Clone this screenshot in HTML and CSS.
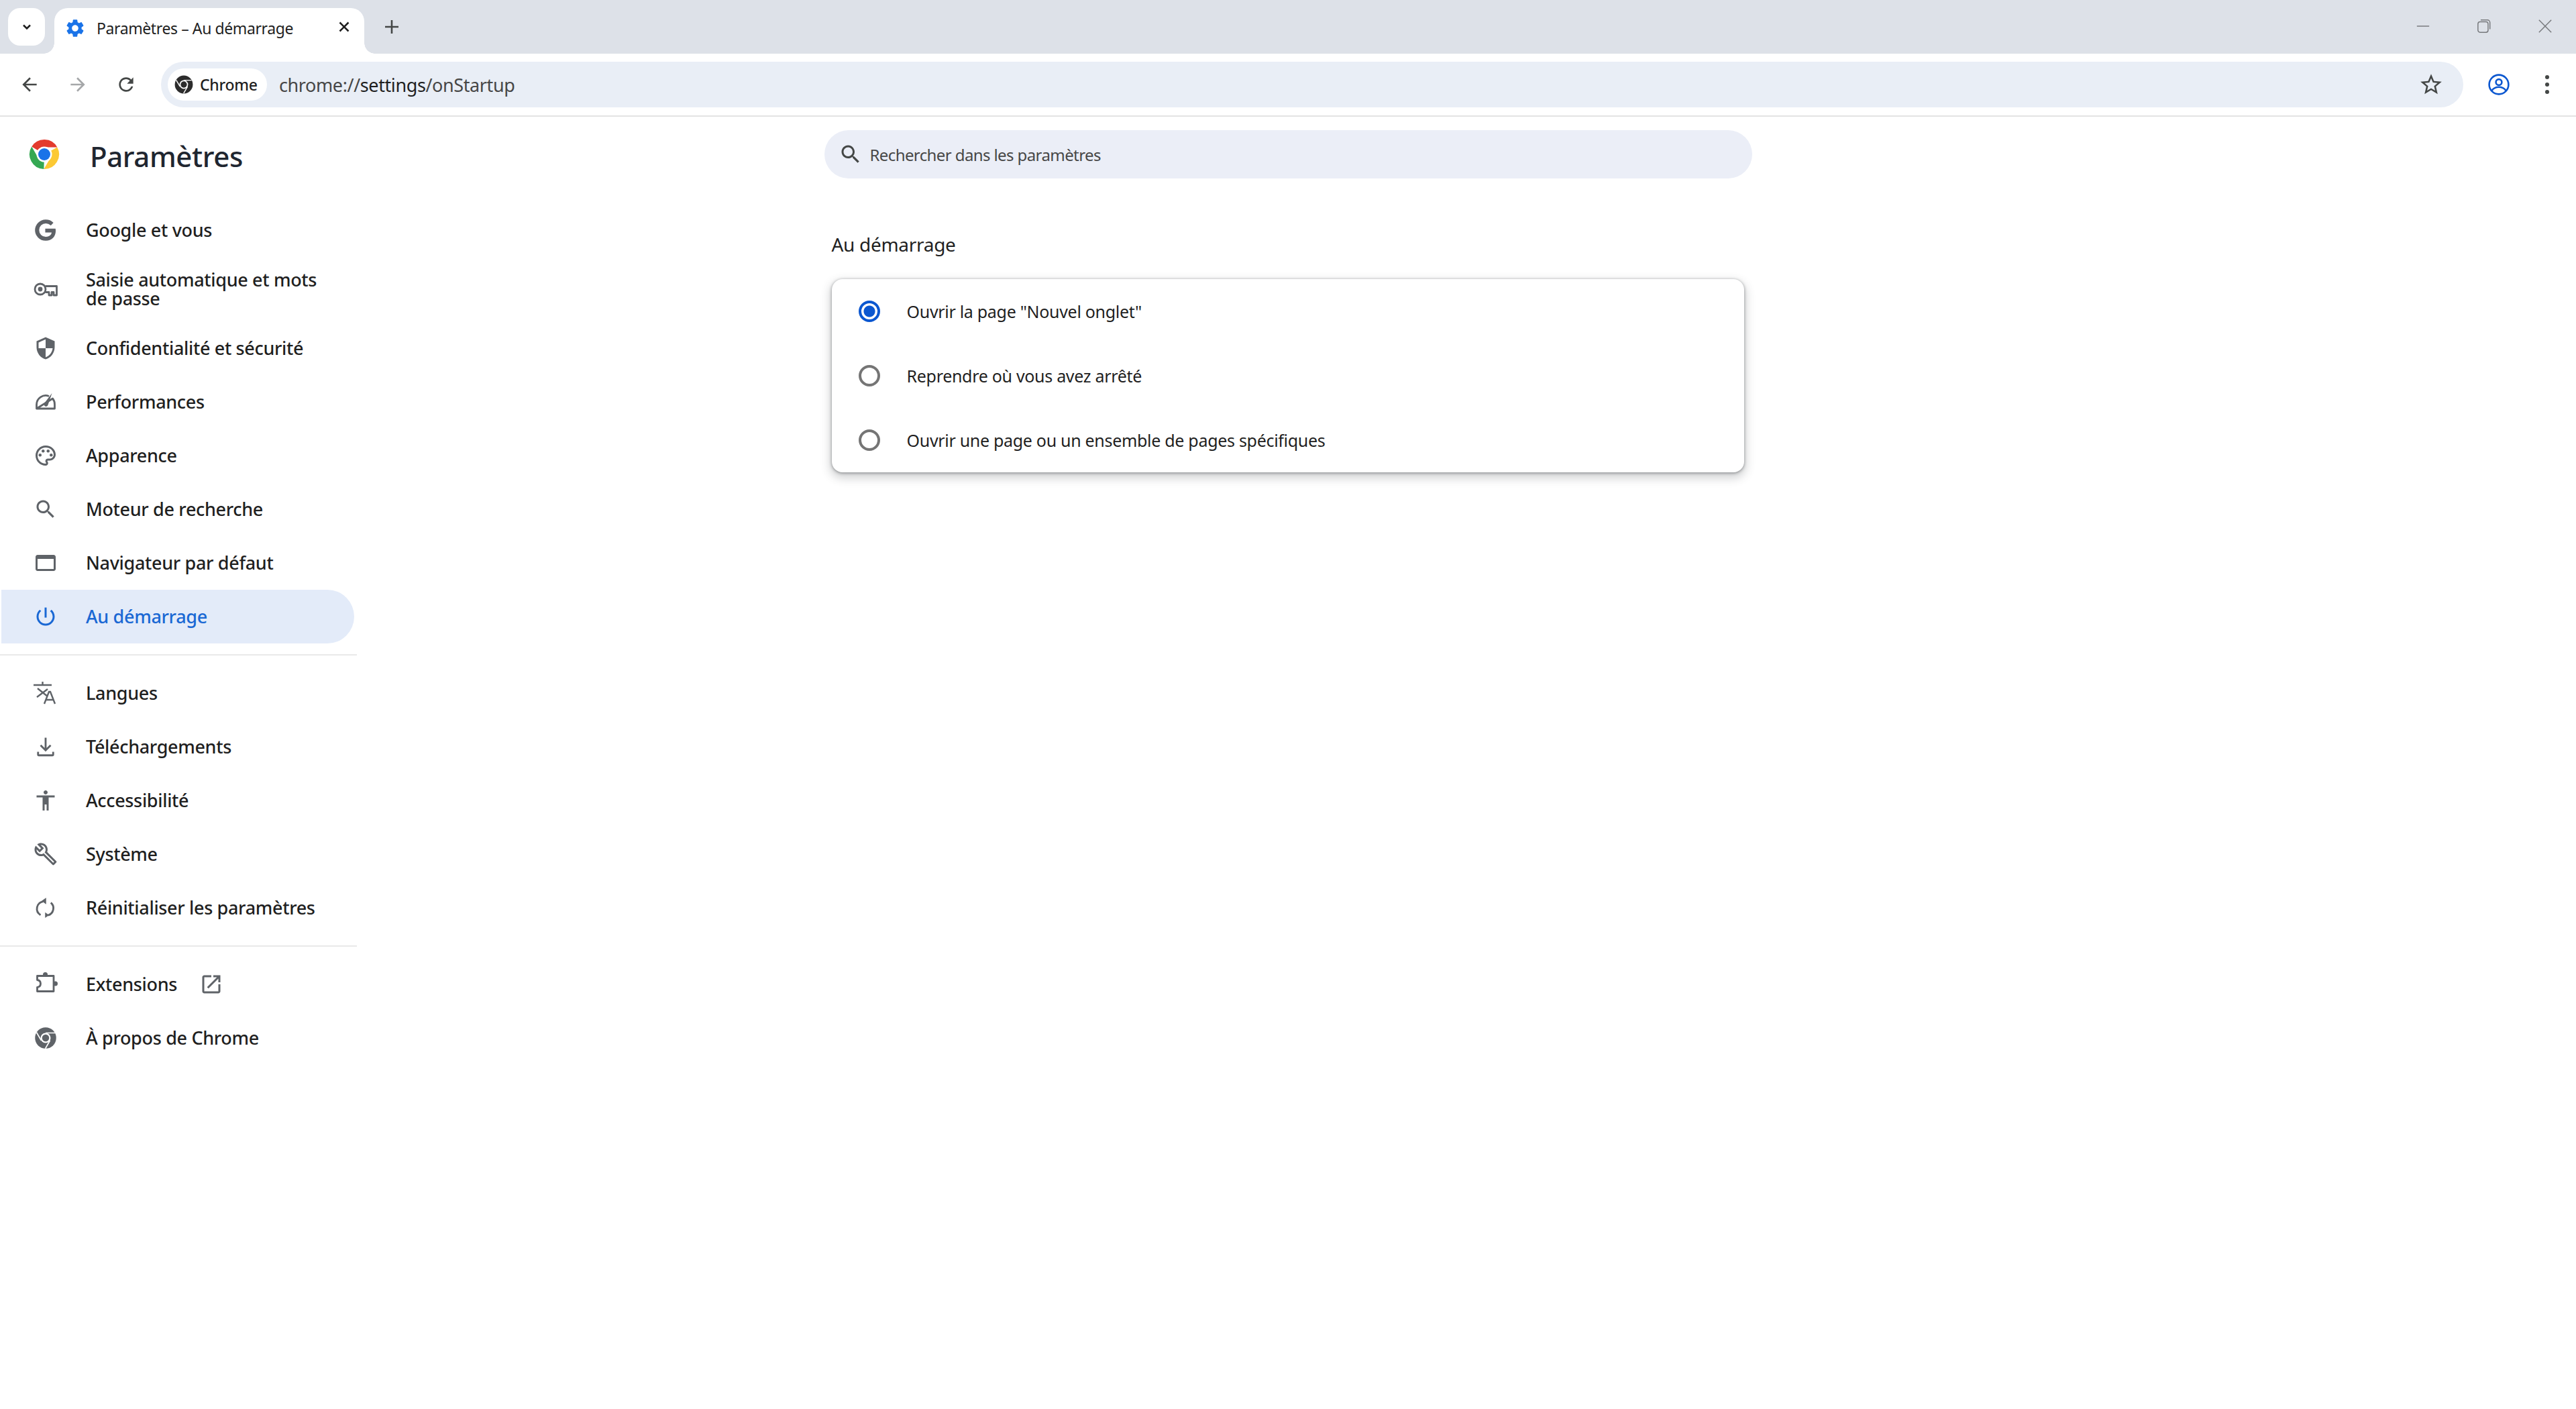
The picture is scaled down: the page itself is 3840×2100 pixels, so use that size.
FILE: index.html
```html
<!DOCTYPE html>
<html lang="fr">
<head>
<meta charset="utf-8">
<title>Paramètres – Au démarrage</title>
<link rel="stylesheet" href="styles.css">
</head>
<body>
<svg class="defs" width="0" height="0">
  <defs>
    <path id="wedge" d="M0 0L0 -10.5L19.34 -10.5A22 22 0 0 0 -18.76 -11.5Z"/>
  </defs>
</svg>
<div class="app">
  <header class="tabstrip">
    <div class="tabsearch"><svg class="i20" viewBox="0 0 20 20"><path d="M5 7.5l5 5 5-5" fill="none" stroke="#1f1f1f" stroke-width="2.6"/></svg></div>
    <div class="tab">
      <svg class="tabicon" viewBox="0 0 24 24"><path fill="#1a73e8" d="M19.14 12.94c.04-.3.06-.61.06-.94 0-.32-.02-.64-.07-.94l2.03-1.58c.18-.14.23-.41.12-.61l-1.92-3.32c-.12-.22-.37-.29-.59-.22l-2.39.96c-.5-.38-1.03-.7-1.62-.94l-.36-2.54c-.04-.24-.24-.41-.48-.41h-3.84c-.24 0-.43.17-.47.41l-.36 2.54c-.59.24-1.13.57-1.62.94l-2.39-.96c-.22-.08-.47 0-.59.22L2.74 8.87c-.12.21-.08.47.12.61l2.03 1.58c-.05.3-.09.63-.09.94s.02.64.07.94l-2.03 1.58c-.18.14-.23.41-.12.61l1.92 3.32c.12.22.37.29.59.22l2.39-.96c.5.38 1.03.7 1.62.94l.36 2.54c.05.24.24.41.48.41h3.84c.24 0 .44-.17.47-.41l.36-2.54c.59-.24 1.13-.56 1.62-.94l2.39.96c.22.08.47 0 .59-.22l1.92-3.32c.12-.22.07-.47-.12-.61l-2.01-1.58zM12 15.6c-1.98 0-3.6-1.62-3.6-3.6s1.62-3.6 3.6-3.6 3.6 1.62 3.6 3.6-1.62 3.6-3.6 3.6z"/></svg>
      <span class="tabtitle">Paramètres – Au démarrage</span>
      <svg class="tabclose" viewBox="0 0 20 20"><path d="M3.5 3.5l13 13M16.5 3.5l-13 13" stroke="#1f1f1f" stroke-width="2.6" fill="none"/></svg>
    </div>
    <svg class="newtab" viewBox="0 0 24 24"><path d="M12 2v20M2 12h20" stroke="#444746" stroke-width="2.6" fill="none"/></svg>
    <div class="winctl">
      <svg class="winbtn" viewBox="0 0 24 24"><path d="M2 12h20" stroke="#77797c" stroke-width="1.6" fill="none"/></svg>
      <svg class="winbtn" viewBox="0 0 24 24"><rect x="2" y="5" width="16.5" height="17" rx="3.5" stroke="#77797c" stroke-width="1.6" fill="none"/><path d="M6.5 2h11a4 4 0 0 1 4 4v11" stroke="#77797c" stroke-width="1.6" fill="none"/></svg>
      <svg class="winbtn" viewBox="0 0 24 24"><path d="M2 2l20 20M22 2L2 22" stroke="#77797c" stroke-width="1.6" fill="none"/></svg>
    </div>
  </header>

  <nav class="toolbar">
    <svg class="tool" viewBox="0 0 24 24"><path fill="#444746" d="M20 11H7.83l5.59-5.59L12 4l-8 8 8 8 1.41-1.41L7.83 13H20v-2z"/></svg>
    <svg class="tool" viewBox="0 0 24 24"><path fill="#a5a7a9" d="M12 4l-1.41 1.41L16.17 11H4v2h12.17l-5.58 5.59L12 20l8-8z"/></svg>
    <svg class="tool" viewBox="0 0 24 24"><path fill="#444746" d="M17.65 6.35C16.2 4.9 14.21 4 12 4c-4.42 0-7.99 3.58-7.99 8s3.57 8 7.99 8c3.73 0 6.84-2.55 7.73-6h-2.08c-.82 2.33-3.04 4-5.65 4-3.31 0-6-2.69-6-6s2.69-6 6-6c1.66 0 3.14.69 4.22 1.78L13 11h7V4l-2.35 2.35z"/></svg>
    <div class="omnibox">
      <div class="chip">
        <svg class="chipicon" viewBox="-24 -24 48 48">
          <circle r="23" fill="#2c2c2c"/><circle r="11" fill="#fff"/><circle r="8" fill="#2c2c2c"/>
          <path d="M0 -11L20 -11M9.5 5.5L-0.5 22.5M-9.5 5.5L-19.5 -11.5" stroke="#fff" stroke-width="2.4" fill="none"/>
        </svg>
        <span>Chrome</span>
      </div>
      <span class="url"><span class="urlscheme">chrome://</span>settings<span class="urlscheme">/onStartup</span></span>
      <svg class="star" viewBox="0 0 24 24"><path fill="#444746" d="M22 9.24l-7.19-.62L12 2 9.19 8.63 2 9.24l5.46 4.73L5.82 21 12 17.27 18.18 21l-1.63-7.03L22 9.24zM12 15.4l-3.76 2.27 1-4.28-3.32-2.88 4.38-.38L12 6.1l1.71 4.04 4.38.38-3.32 2.88 1 4.28L12 15.4z"/></svg>
    </div>
    <svg class="profile" viewBox="0 0 32 32"><circle cx="16" cy="16" r="14.4" fill="none" stroke="#0b57d0" stroke-width="2.6"/><circle cx="16" cy="12.5" r="4.4" fill="none" stroke="#0b57d0" stroke-width="2.6"/><path d="M5.5 25c2.5-3.6 6.3-5.2 10.5-5.2s8 1.6 10.5 5.2" fill="none" stroke="#0b57d0" stroke-width="2.6"/></svg>
    <svg class="menu" viewBox="0 0 8 32"><circle cx="4" cy="5" r="3" fill="#444746"/><circle cx="4" cy="16" r="3" fill="#444746"/><circle cx="4" cy="27" r="3" fill="#444746"/></svg>
  </nav>

  <div class="page">
    <aside class="sidebar">
      <div class="brand">
        <svg class="logo" viewBox="-24 -24 48 48">
          <use href="#wedge" fill="#e33b2e"/>
          <use href="#wedge" fill="#fcc934" transform="rotate(120)"/>
          <use href="#wedge" fill="#34a853" transform="rotate(240)"/>
          <circle r="11.5" fill="#fff"/><circle r="9" fill="#1a73e8"/>
        </svg>
        <h1 class="brandtitle">Paramètres</h1>
      </div>
      <ul class="menulist">
        <li class="item"><svg class="icon" viewBox="0 0 24 24"><path fill="#5f6368" stroke="#5f6368" stroke-width="1.1" d="M21.35 11.1h-9.17v2.73h6.51c-.33 3.81-3.5 5.44-6.5 5.44C8.36 19.27 5 16.25 5 12c0-4.1 3.2-7.27 7.2-7.27 3.09 0 4.9 1.97 4.9 1.97L19 4.72S16.56 2 12.1 2C6.42 2 2 6.8 2 12c0 5.05 4.13 10 10.22 10 5.35 0 9.25-3.67 9.25-9.09 0-1.15-.12-1.81-.12-1.81z"/></svg><span>Google et vous</span></li>
        <li class="item tall"><svg class="icon" viewBox="0 0 36 36"><circle cx="10" cy="18" r="8" fill="none" stroke="#5f6368" stroke-width="2.8"/><circle cx="10" cy="18" r="3.4" fill="#5f6368"/><path d="M17.500 13.500H34.500V27H30V22.500H27V27H23V22.500H17.500" fill="none" stroke="#5f6368" stroke-width="2.8" stroke-linejoin="round"/></svg><span>Saisie automatique et mots de passe</span></li>
        <li class="item"><svg class="icon" viewBox="0 0 24 24"><path fill="#5f6368" d="M12 1L3 5v6c0 5.55 3.84 10.74 9 12 5.16-1.26 9-6.45 9-12V5l-9-4zm0 10.99h7c-.53 4.12-3.28 7.79-7 8.94V12H5V6.3l7-3.11v8.8z"/></svg><span>Confidentialité et sécurité</span></li>
        <li class="item"><svg class="icon" viewBox="0 0 36 36"><path d="M4.500 28V22A13.500 13.500 0 0 1 23 9.500M28.500 13A13.500 13.500 0 0 1 31.500 22V28H4.500Z" fill="none" stroke="#5f6368" stroke-width="2.800" stroke-linejoin="round"/><path d="M27.500 5L21.500 22.500A3 3 0 1 1 16.300 19.800Z" fill="#5f6368"/></svg><span>Performances</span></li>
        <li class="item"><svg class="icon" viewBox="0 0 24 24"><path fill="#5f6368" d="M12 22C6.49 22 2 17.51 2 12S6.49 2 12 2s10 4.04 10 9c0 3.31-2.69 6-6 6h-1.770c-.28 0-.5.22-.5.5 0 .12.05.23.13.33.41.47.64 1.060.64 1.670 0 1.380-1.120 2.500-2.500 2.500zm0-18c-4.410 0-8 3.590-8 8s3.590 8 8 8c.28 0 .5-.22.5-.5 0-.16-.08-.28-.14-.35-.41-.46-.63-1.050-.63-1.650 0-1.380 1.120-2.500 2.500-2.500H16c2.210 0 4-1.790 4-4 0-3.860-3.590-7-8-7z"/><circle cx="6.500" cy="11.500" r="1.500" fill="#5f6368"/><circle cx="9.500" cy="7.500" r="1.500" fill="#5f6368"/><circle cx="14.500" cy="7.500" r="1.500" fill="#5f6368"/><circle cx="17.500" cy="11.500" r="1.500" fill="#5f6368"/></svg><span>Apparence</span></li>
        <li class="item"><svg class="icon" viewBox="0 0 24 24"><path fill="#5f6368" d="M15.500 14h-.79l-.28-.27C15.410 12.590 16 11.110 16 9.500 16 5.910 13.090 3 9.500 3S3 5.910 3 9.500 5.910 16 9.500 16c1.610 0 3.090-.59 4.230-1.570l.27.28v.79l5 4.990L20.490 19l-4.990-5zm-6 0C7.010 14 5 11.990 5 9.500S7.010 5 9.500 5 14 7.010 14 9.500 11.990 14 9.500 14z"/></svg><span>Moteur de recherche</span></li>
        <li class="item"><svg class="icon" viewBox="0 0 24 24"><path fill="#5f6368" d="M20 4H4c-1.110 0-2 .9-2 2v12c0 1.100.89 2 2 2h16c1.100 0 2-.9 2-2V6c0-1.100-.89-2-2-2zm0 14H4V8h16v10z"/></svg><span>Navigateur par défaut</span></li>
        <li class="item active"><svg class="icon" viewBox="0 0 24 24"><path fill="#1a68d4" d="M13 3h-2v10h2V3zm4.830 2.170l-1.420 1.420C17.990 7.860 19 9.810 19 12c0 3.870-3.130 7-7 7s-7-3.130-7-7c0-2.190 1.010-4.140 2.580-5.420L6.170 5.170C4.230 6.820 3 9.260 3 12c0 4.970 4.030 9 9 9s9-4.030 9-9c0-2.740-1.230-5.180-3.170-6.830z"/></svg><span>Au démarrage</span></li>
      </ul>
      <hr class="divider">
      <ul class="menulist">
        <li class="item"><svg class="icon" viewBox="0 0 36 36"><path fill="none" stroke="#5f6368" stroke-width="2.400" d="M0 6h27M13.500 1v5M21 12L5 24M6 11l15 12M16 34l7-18h2l7 18M18.500 28h11"/></svg><span>Langues</span></li>
        <li class="item"><svg class="icon" viewBox="0 0 24 24"><path fill="none" stroke="#5f6368" stroke-width="1.900" d="M12 3v12M7 10.500l5 5 5-5M4.500 17v2.700a.8.8 0 0 0 .8.8h13.400a.8.8 0 0 0 .8-.8V17"/></svg><span>Téléchargements</span></li>
        <li class="item"><svg class="icon" viewBox="0 0 24 24"><path fill="#5f6368" d="M12 2c1.100 0 2 .9 2 2s-.9 2-2 2-2-.9-2-2 .9-2 2-2zm9 7h-6v13h-2v-6h-2v6H9V9H3V7h18v2z"/></svg><span>Accessibilité</span></li>
        <li class="item"><svg class="icon" viewBox="0 0 24 24"><path fill="#5f6368" d="M22.610 18.990l-9.080-9.080c.93-2.340.45-5.100-1.440-7C9.790.61 6.210.4 3.660 2.250L7.500 6.100 6.080 7.510 2.250 3.690C.4 6.230.61 9.820 2.910 12.110c1.860 1.860 4.570 2.350 6.890 1.480l9.110 9.110c.39.39 1.020.39 1.410 0l2.300-2.300c.4-.38.4-1.020-.01-1.410zm-3 1.600l-9.460-9.460c-.61.45-1.290.72-2 .82-1.360.2-2.790-.21-3.830-1.250C3.370 9.760 2.930 8.500 3 7.260l3.090 3.090 4.240-4.240-3.090-3.090c1.240-.07 2.490.37 3.440 1.310 1.080 1.080 1.490 2.570 1.240 3.960-.12.71-.42 1.370-.88 1.960l9.450 9.450-.88.88z"/></svg><span>Système</span></li>
        <li class="item"><svg class="icon" viewBox="0 0 24 24"><path fill="none" stroke="#5f6368" stroke-width="1.900" d="M9.500 5.700A7.300 7.300 0 0 0 7 19.200M14.500 19.400A7.300 7.300 0 0 0 17.200 6.900"/><path fill="#5f6368" d="M12.500 2v6.500L8 5.200zM11.500 22v-5.500l4 2.900z"/></svg><span>Réinitialiser les paramètres</span></li>
      </ul>
      <hr class="divider">
      <ul class="menulist">
        <li class="item"><svg class="icon" viewBox="0 0 36 36"><path fill="none" stroke="#5f6368" stroke-width="2.800" stroke-linejoin="round" d="M5.500 5.500H30V28.500H5.500V22.500C9 22 10.500 20 10.500 17C10.500 14 9 12 5.500 11.500Z"/><circle cx="17.500" cy="3.500" r="3.500" fill="#5f6368"/><circle cx="32.500" cy="17" r="3.500" fill="#5f6368"/></svg><span>Extensions</span><svg class="openext" viewBox="0 0 24 24"><path fill="#5f6368" d="M19 19H5V5h7V3H5c-1.110 0-2 .9-2 2v14c0 1.100.89 2 2 2h14c1.100 0 2-.9 2-2v-7h-2v7zM14 3v2h3.590l-9.830 9.830 1.410 1.410L19 6.410V10h2V3h-7z"/></svg></li>
        <li class="item"><svg class="icon" viewBox="-24 -24 48 48"><circle r="21" fill="#5f6368"/><circle r="10" fill="#fff"/><circle r="7" fill="#5f6368"/><path d="M0 -10L19 -10M8.700 5L-0.500 21M-8.700 5L-18 -11" stroke="#fff" stroke-width="2.200" fill="none"/></svg><span>À propos de Chrome</span></li>
      </ul>
    </aside>

    <main class="content">
      <div class="column">
        <div class="searchbar">
          <svg class="searchicon" viewBox="0 0 24 24"><path fill="#444746" d="M15.500 14h-.79l-.28-.27C15.410 12.590 16 11.110 16 9.500 16 5.910 13.090 3 9.500 3S3 5.910 3 9.500 5.910 16 9.500 16c1.610 0 3.090-.59 4.230-1.570l.27.28v.79l5 4.990L20.490 19l-4.990-5zm-6 0C7.010 14 5 11.990 5 9.500S7.010 5 9.500 5 14 7.010 14 9.500 11.990 14 9.500 14z"/></svg>
          <span>Rechercher dans les paramètres</span>
        </div>
        <h2 class="sectiontitle">Au démarrage</h2>
        <div class="card">
          <div class="row"><span class="radio on"></span><span>Ouvrir la page "Nouvel onglet"</span></div>
          <div class="row"><span class="radio"></span><span>Reprendre où vous avez arrêté</span></div>
          <div class="row"><span class="radio"></span><span>Ouvrir une page ou un ensemble de pages spécifiques</span></div>
        </div>
      </div>
    </main>
    <div class="spacer"></div>
  </div>
</div>
</body>
</html>
```
FILE: styles.css
```css
* { box-sizing: border-box; }
html, body { margin: 0; height: 100%; background: #fff; }
body { font-family: "Noto Sans", "Open Sans", sans-serif; color: #1f1f1f; overflow: hidden; }
.defs { position: absolute; }
.app { display: flex; flex-direction: column; height: 100%; }

.tabstrip { height: 80px; background: #dde1e8; display: flex; align-items: flex-start; padding: 12px 0 0 12px; flex: none; }
.tabsearch { width: 55px; height: 56px; background: #fff; border-radius: 18px; display: flex; align-items: center; justify-content: center; }
.i20 { width: 20px; height: 20px; }
.tab { width: 462px; height: 68px; margin-left: 14px; background: #fff; border-radius: 20px 20px 0 0; display: flex; align-items: flex-start; padding: 14px 0 0 15px; position: relative; }
.tab::before, .tab::after { content: ""; position: absolute; bottom: 0; width: 16px; height: 16px; background: radial-gradient(circle at 0 0, transparent 15.5px, #fff 16px); }
.tab::before { left: -16px; }
.tab::after { right: -16px; background: radial-gradient(circle at 100% 0, transparent 15.5px, #fff 16px); }
.tabicon { width: 32px; height: 32px; flex: none; }
.tabtitle { font-size: 23px; line-height: 32px; margin-left: 16px; width: 349px; white-space: nowrap; letter-spacing: -0.4px; }
.tabclose { width: 20px; height: 20px; margin: 4px 0 0 10px; flex: none; }
.newtab { width: 24px; height: 24px; margin: 16px 0 0 29px; flex: none; }
.winctl { margin-left: auto; display: flex; gap: 69px; padding: 16px 35px 0 0; }
.winbtn { width: 22px; height: 22px; }

.toolbar { height: 94px; flex: none; background: #fff; border-bottom: 2px solid #e3e3e3; border-radius: 16px 16px 0 0; display: flex; align-items: flex-start; padding: 12px 0 0 28px; position: relative; }
.tool { width: 32px; height: 32px; margin: 18px 40px 0 0; flex: none; }
.omnibox { margin-left: -4px; width: 3432px; height: 68px; background: #e9eef6; border-radius: 34px; display: flex; align-items: center; padding-left: 10px; flex: none; }
.chip { height: 48px; width: 148px; background: #fff; border-radius: 24px; display: flex; align-items: center; padding-left: 10px; font-size: 23px; font-weight: 500; flex: none; letter-spacing: -0.3px; }
.chipicon { width: 28px; height: 28px; margin-right: 10px; flex: none; }
.url { font-size: 27px; margin-left: 18px; color: #1f1f1f; letter-spacing: -0.4px; }
.urlscheme { color: #474747; }
.star { width: 38px; height: 38px; margin-left: auto; margin-right: 29px; flex: none; }
.profile { width: 32px; height: 32px; margin: 18px 0 0 37px; flex: none; }
.menu { width: 8px; height: 32px; margin: 18px 0 0 52px; flex: none; }

.page { flex: 1; display: grid; grid-template-columns: 532px 1fr 532px; min-height: 0; }
.brand { display: flex; align-items: center; height: 108px; padding: 10px 0 0 42px; margin-bottom: 21px; }
.logo { width: 48px; height: 48px; margin-top: -6px; flex: none; }
.brandtitle { font-size: 42px; line-height: 56px; font-weight: 500; margin: 0 0 0 44px; color: #1f2630; letter-spacing: -0.4px; }
.menulist { list-style: none; margin: 0; padding: 0; }
.item { width: 526px; height: 80px; margin-left: 2px; display: flex; align-items: center; padding-left: 48px; font-size: 27px; line-height: 28px; font-weight: 500; color: #1f1f1f; letter-spacing: -0.34px; }
.item.tall { height: 96px; }
.item.active { background: #e3ebf9; border-radius: 0 40px 40px 0; color: #1a68d4; }
.icon { width: 36px; height: 36px; margin-right: 42px; flex: none; }
.item > span { width: 380px; flex: none; }
.item > span:has(+ .openext) { width: auto; }
.openext { width: 36px; height: 36px; margin-left: 33px; flex: none; }
.divider { border: 0; height: 2px; background: #e9e9e9; margin: 16px 0; }

.content { display: flex; justify-content: center; }
.column { width: 1383px; padding-top: 20px; }
.searchbar { height: 72px; background: #ebeef7; border-radius: 36px; display: flex; align-items: center; padding-left: 21px; font-size: 24px; color: #474747; letter-spacing: -0.6px; }
.searchicon { width: 36px; height: 36px; margin-right: 11px; flex: none; }
.sectiontitle { font-size: 28px; line-height: 40px; font-weight: 400; margin: 78px 0 32px 11px; color: #1f1f1f; letter-spacing: -0.3px; }
.card { width: 1360px; margin-left: 11px; height: 288px; background: #fff; border-radius: 16px; box-shadow: 0 1px 4px rgba(60,64,67,.55), 0 6px 14px 3px rgba(60,64,67,.22); }
.row { height: 96px; display: flex; align-items: center; padding-left: 40px; font-size: 25px; color: #1f1f1f; letter-spacing: -0.3px; }
.radio { width: 32px; height: 32px; border: 4px solid #757575; border-radius: 50%; margin-right: 40px; flex: none; }
.radio.on { border-color: #0b57d0; background: radial-gradient(circle, #0b57d0 0 8px, transparent 9px); }
```
